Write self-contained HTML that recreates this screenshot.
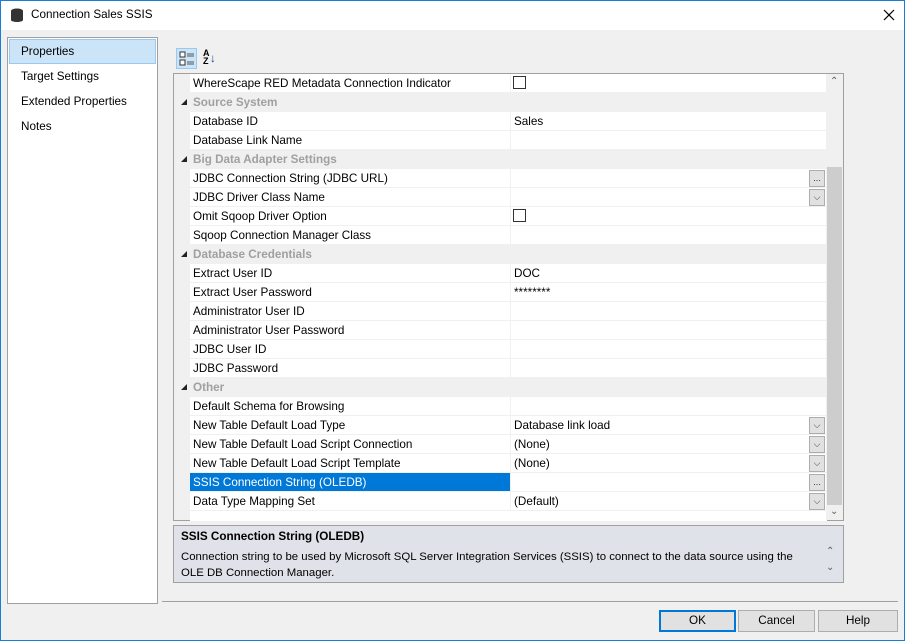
<!DOCTYPE html><html><head><style>
*{box-sizing:border-box;margin:0;padding:0}
body{width:905px;height:641px;position:relative;background:#f0f0f0;font-family:"Liberation Sans",sans-serif;font-size:11.7px;color:#000;overflow:hidden}
.frame{position:absolute;left:0;top:0;width:905px;height:641px;border:1px solid #1a7fd4;pointer-events:none}
.abs{position:absolute}
.title{left:1px;top:1px;width:903px;height:29px;background:#fff}
.left{left:7px;top:37px;width:151px;height:567px;background:#fff;border:1px solid #a0a0a0}
.li{position:absolute;left:13px}
.grid{left:173px;top:73px;width:671px;height:448px;border:1px solid #a0a0a0;background:#f0f0f0}
.row{position:absolute;left:0;height:19px;width:652px}
.row .n{position:absolute;left:16px;width:320px;height:18px;background:#fff;padding:3px 0 0 3px;white-space:nowrap}
.row .v{position:absolute;left:337px;width:315px;height:18px;background:#fff;padding:3px 0 0 3px}
.cat .c{position:absolute;left:19px;top:3px;color:#a0a0a0;font-weight:bold}
.cat .t{position:absolute;left:7px;top:6px;width:0;height:0;border-left:6px solid transparent;border-bottom:6px solid #222}
.btnd{position:absolute;right:1px;top:1px;width:16px;height:17px;border:1px solid #adadad;background:#e1e1e1;font-size:9px;text-align:center;line-height:14px;color:#333}
.cb{position:absolute;left:2px;top:2px;width:13px;height:13px;border:1px solid #333;background:#fff}
.btn{position:absolute;top:610px;height:22px;border:1px solid #adadad;background:#e1e1e1;text-align:center;line-height:20px}
</style></head><body>
<div class="abs title">
<svg class="abs" style="left:9px;top:7px" width="14" height="14"><ellipse cx="7" cy="3" rx="6" ry="2.5" fill="#333"/><rect x="1" y="3" width="12" height="9" fill="#333"/><ellipse cx="7" cy="12" rx="6" ry="2" fill="#333"/></svg>
<div class="abs" style="left:30px;top:7px">Connection Sales SSIS</div>
<svg class="abs" style="left:882px;top:8px" width="12" height="12"><path d="M1 1L11 11M11 1L1 11" stroke="#000" stroke-width="1.2"/></svg>
</div>
<div class="abs left">
<div class="abs" style="left:1px;top:1px;width:147px;height:25px;background:#cce4f7;border:1px solid #99c9ef"></div>
<div class="li" style="top:7px">Properties</div>
<div class="li" style="top:32px">Target Settings</div>
<div class="li" style="top:57px">Extended Properties</div>
<div class="li" style="top:82px">Notes</div>
</div>
<div class="abs" style="left:176px;top:48px;width:21px;height:21px;background:#cce4f7;border:1px solid #99c9ef"></div>
<svg class="abs" style="left:179px;top:51px" width="16" height="16"><rect x="1" y="1" width="5" height="5" fill="#fff" stroke="#333"/><rect x="1" y="9" width="5" height="5" fill="#fff" stroke="#333"/><path d="M8 3h7M8 5h7M8 11h7M8 13h7" stroke="#555"/></svg>
<div class="abs" style="left:203px;top:49px;font-size:9px;line-height:8px;font-weight:bold">A<br>Z</div>
<div class="abs" style="left:210px;top:52px;color:#1a3f9e">↓</div>
<div class="abs grid">
<div class="row" style="top:0"><div class="n">WhereScape RED Metadata Connection Indicator</div><div class="v"><div class="cb"></div></div></div>
<div class="row cat" style="top:19px"><div class="t"></div><div class="c">Source System</div></div>
<div class="row" style="top:38px"><div class="n">Database ID</div><div class="v">Sales</div></div>
<div class="row" style="top:57px"><div class="n">Database Link Name</div><div class="v"></div></div>
<div class="row cat" style="top:76px"><div class="t"></div><div class="c">Big Data Adapter Settings</div></div>
<div class="row" style="top:95px"><div class="n">JDBC Connection String (JDBC URL)</div><div class="v"><div class="btnd">...</div></div></div>
<div class="row" style="top:114px"><div class="n">JDBC Driver Class Name</div><div class="v"><div class="btnd">⌵</div></div></div>
<div class="row" style="top:133px"><div class="n">Omit Sqoop Driver Option</div><div class="v"><div class="cb"></div></div></div>
<div class="row" style="top:152px"><div class="n">Sqoop Connection Manager Class</div><div class="v"></div></div>
<div class="row cat" style="top:171px"><div class="t"></div><div class="c">Database Credentials</div></div>
<div class="row" style="top:190px"><div class="n">Extract User ID</div><div class="v">DOC</div></div>
<div class="row" style="top:209px"><div class="n">Extract User Password</div><div class="v">********</div></div>
<div class="row" style="top:228px"><div class="n">Administrator User ID</div><div class="v"></div></div>
<div class="row" style="top:247px"><div class="n">Administrator User Password</div><div class="v"></div></div>
<div class="row" style="top:266px"><div class="n">JDBC User ID</div><div class="v"></div></div>
<div class="row" style="top:285px"><div class="n">JDBC Password</div><div class="v"></div></div>
<div class="row cat" style="top:304px"><div class="t"></div><div class="c">Other</div></div>
<div class="row" style="top:323px"><div class="n">Default Schema for Browsing</div><div class="v"></div></div>
<div class="row" style="top:342px"><div class="n">New Table Default Load Type</div><div class="v">Database link load<div class="btnd">⌵</div></div></div>
<div class="row" style="top:361px"><div class="n">New Table Default Load Script Connection</div><div class="v">(None)<div class="btnd">⌵</div></div></div>
<div class="row" style="top:380px"><div class="n">New Table Default Load Script Template</div><div class="v">(None)<div class="btnd">⌵</div></div></div>
<div class="row" style="top:399px"><div class="n" style="background:#0078d7;color:#fff">SSIS Connection String (OLEDB)</div><div class="v"><div class="btnd">...</div></div></div>
<div class="row" style="top:418px"><div class="n">Data Type Mapping Set</div><div class="v">(Default)<div class="btnd">⌵</div></div></div>
<div class="abs" style="left:16px;top:437px;width:637px;height:10px;background:#fff"></div>
<div class="abs" style="left:652px;top:0;width:17px;height:446px;background:#f0f0f0"></div>
<div class="abs" style="left:653px;top:93px;width:15px;height:338px;background:#cdcdcd"></div>
<div class="abs" style="left:656px;top:2px;font-size:10px;color:#606060">⌃</div>
<div class="abs" style="left:656px;top:432px;font-size:10px;color:#606060">⌄</div>
</div>
<div class="abs" style="left:173px;top:525px;width:671px;height:58px;background:#dfe2e8;border:1px solid #a0a0a0">
<div class="abs" style="left:7px;top:4px;font-weight:bold">SSIS Connection String (OLEDB)</div>
<div class="abs" style="left:7px;top:23px;line-height:16px;width:634px;font-size:11.4px">Connection string to be used by Microsoft SQL Server Integration Services (SSIS) to connect to the data source using the OLE DB Connection Manager.</div>
<div class="abs" style="left:652px;top:20px;font-size:10px;color:#606060">⌃</div>
<div class="abs" style="left:652px;top:36px;font-size:10px;color:#606060">⌄</div>
</div>
<div class="abs" style="left:162px;top:601px;width:736px;height:1px;background:#a0a0a0"></div>
<div class="btn" style="left:659px;width:77px;border:2px solid #0078d7;line-height:18px">OK</div>
<div class="btn" style="left:738px;width:77px">Cancel</div>
<div class="btn" style="left:818px;width:80px">Help</div>
<div class="frame"></div>
</body></html>
